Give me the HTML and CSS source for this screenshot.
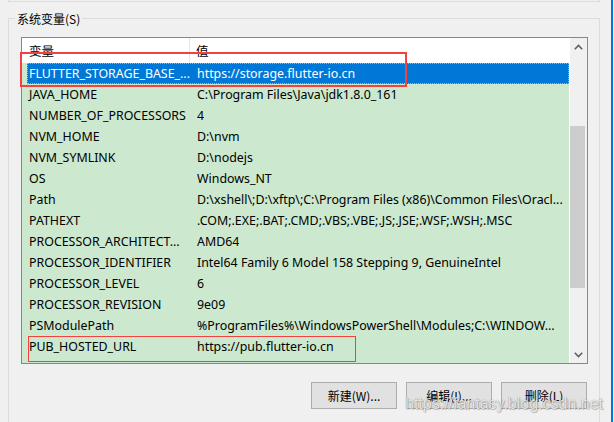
FILE: index.html
```html
<!DOCTYPE html>
<html lang="zh-CN">
<head>
<meta charset="utf-8">
<title>系统变量</title>
<link rel="stylesheet" href="styles.css">
</head>
<body>
<div class="window">
  <div class="main">
    <div class="prev-group"></div>
    <fieldset class="group">
      <legend>系统变量(S)</legend>
      <div class="group-body">
        <div class="listbox">
          <div class="list">
            <div class="header">
              <div class="hcol hname">变量</div>
              <div class="hcol hvalue">值</div>
            </div>
            <div class="rows">
              <div class="row selected"><span class="name">FLUTTER_STORAGE_BASE_...</span><span class="value">https://storage.flutter-io.cn</span></div>
              <div class="row"><span class="name">JAVA_HOME</span><span class="value">C:\Program Files\Java\jdk1.8.0_161</span></div>
              <div class="row"><span class="name">NUMBER_OF_PROCESSORS</span><span class="value">4</span></div>
              <div class="row"><span class="name">NVM_HOME</span><span class="value">D:\nvm</span></div>
              <div class="row"><span class="name">NVM_SYMLINK</span><span class="value">D:\nodejs</span></div>
              <div class="row"><span class="name">OS</span><span class="value">Windows_NT</span></div>
              <div class="row"><span class="name">Path</span><span class="value">D:\xshell\;D:\xftp\;C:\Program Files (x86)\Common Files\Oracl...</span></div>
              <div class="row"><span class="name">PATHEXT</span><span class="value">.COM;.EXE;.BAT;.CMD;.VBS;.VBE;.JS;.JSE;.WSF;.WSH;.MSC</span></div>
              <div class="row"><span class="name">PROCESSOR_ARCHITECT...</span><span class="value">AMD64</span></div>
              <div class="row"><span class="name">PROCESSOR_IDENTIFIER</span><span class="value">Intel64 Family 6 Model 158 Stepping 9, GenuineIntel</span></div>
              <div class="row"><span class="name">PROCESSOR_LEVEL</span><span class="value">6</span></div>
              <div class="row"><span class="name">PROCESSOR_REVISION</span><span class="value">9e09</span></div>
              <div class="row"><span class="name">PSModulePath</span><span class="value">%ProgramFiles%\WindowsPowerShell\Modules;C:\WINDOW...</span></div>
              <div class="row"><span class="name">PUB_HOSTED_URL</span><span class="value">https://pub.flutter-io.cn</span></div>
            </div>
          </div>
          <div class="scrollbar">
            <div class="sb-btn">
              <svg width="9" height="6" viewBox="0 0 9 6"><polyline points="0.8,5.2 4.5,1.5 8.2,5.2" fill="none" stroke="#606060" stroke-width="1.6"/></svg>
            </div>
            <div class="track"><div class="thumb"></div></div>
            <div class="sb-btn">
              <svg width="9" height="6" viewBox="0 0 9 6"><polyline points="0.8,0.8 4.5,4.5 8.2,0.8" fill="none" stroke="#606060" stroke-width="1.6"/></svg>
            </div>
          </div>
          <div class="mark mark-top"></div>
          <div class="mark mark-bottom"></div>
        </div>
        <div class="buttons">
          <button class="btn">新建(W)...</button>
          <button class="btn">编辑(I)...</button>
          <button class="btn">删除(L)</button>
        </div>
      </div>
    </fieldset>
    <div class="watermark">https://fantasy.blog.csdn.net</div>
  </div>
  <div class="edge"></div>
</div>
</body>
</html>
```

FILE: styles.css
```css
html, body {
  margin: 0;
  padding: 0;
  height: 100%;
  overflow: hidden;
  background: #f0f0f0;
}

body {
  font-family: "Noto Sans", "Noto Sans CJK SC", sans-serif;
  font-size: 12px;
  color: #000;
}

.window {
  display: flex;
  width: 614px;
  height: 422px;
}

.main {
  position: relative;
  width: 611px;
  height: 422px;
}

.edge {
  width: 2px;
  background: #0078d7;
}

.prev-group {
  margin: 0 11px 0 8px;
  height: 1px;
  border: 1px solid #dcdcdc;
  border-top: none;
}

.group {
  margin: 8px 11px 0 8px;
  padding: 0;
  border: 1px solid #dcdcdc;
  height: 420px;
  min-width: 0;
}

.group legend {
  margin-left: 6px;
  padding: 0 2px;
  font-family: "Noto Sans CJK SC", sans-serif;
  font-size: 12px;
  line-height: 17px;
  color: #000;
}

.group-body {
  padding: 10px 11px 0 12px;
}

.listbox {
  position: relative;
  display: flex;
  height: 325px;
  border: 1px solid #828790;
  background: #fff;
}

.list {
  width: 547px;
  background: #cce8cf;
  overflow: hidden;
}

.header {
  display: flex;
  height: 25px;
  background: #fff;
  font-family: "Noto Sans CJK SC", sans-serif;
  font-size: 12.5px;
}

.hcol {
  display: flex;
  align-items: center;
}

.hname {
  width: 168px;
  padding-left: 7px;
  box-sizing: border-box;
  border-right: 1px solid #e5e5e5;
}

.hvalue {
  padding-left: 6px;
}

.row {
  display: flex;
  align-items: center;
  height: 21px;
  margin-left: 5px;
  white-space: nowrap;
  overflow: hidden;
  font-size: 12.4px;
}

.row .name {
  width: 170px;
  flex: none;
  padding-left: 2px;
  box-sizing: border-box;
}

.row .value {
  overflow: hidden;
}

.row.selected {
  background: #0078d7;
  color: #fff;
  outline: 1px dotted #f3a43c;
  outline-offset: -1px;
}

.scrollbar {
  display: flex;
  flex-direction: column;
  width: 17px;
  border-left: 1px solid #fff;
  background: #f0f0f0;
}

.sb-btn {
  display: flex;
  align-items: center;
  justify-content: center;
  height: 17px;
}

.track {
  flex: 1;
  display: flex;
  flex-direction: column;
}

.thumb {
  margin-top: 71px;
  width: 15px;
  height: 162px;
  background: #cdcdcd;
}

.mark {
  position: absolute;
  box-sizing: border-box;
  border: 2px solid #f54040;
}

.mark-top {
  left: -2px;
  top: 14px;
  width: 387px;
  height: 35px;
}

.mark-bottom {
  left: 6px;
  top: 298px;
  width: 328px;
  height: 26px;
  border-width: 1.5px;
}

.buttons {
  display: flex;
  justify-content: flex-end;
  gap: 9px;
  margin-top: 18px;
  padding-right: 1px;
}

.btn {
  width: 86px;
  height: 27px;
  margin: 0;
  padding: 0;
  border: 1px solid #adadad;
  background: #e1e1e1;
  font-family: "Noto Sans CJK SC", sans-serif;
  font-size: 12px;
  color: #000;
}

.watermark {
  position: absolute;
  left: 405px;
  top: 395px;
  font-family: "Liberation Sans", sans-serif;
  font-size: 16px;
  color: rgba(255, 255, 255, 0.8);
  text-shadow: 0 0 1px rgba(0, 0, 0, 0.45), 1px 1px 1px rgba(0, 0, 0, 0.2);
  pointer-events: none;
}
```
